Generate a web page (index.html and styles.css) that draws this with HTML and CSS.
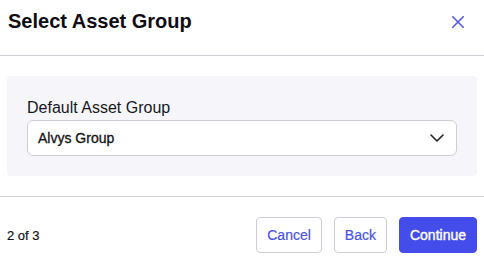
FILE: index.html
```html
<!DOCTYPE html>
<html lang="en">
<head>
  <meta charset="UTF-8">
  <title>Select Asset Group</title>
  <link rel="stylesheet" href="styles.css">
</head>
<body>
  <div class="modal">
    <div class="modal-header">
      <h2 class="modal-title">Select Asset Group</h2>
      <button class="close-btn" aria-label="Close">
        <svg width="12" height="12" viewBox="0 0 12 12">
          <path d="M0.8 0.8L11.2 11.2M11.2 0.8L0.8 11.2" stroke="#4f58e6" stroke-width="1.6" stroke-linecap="round"/>
        </svg>
      </button>
    </div>

    <div class="modal-body">
      <div class="field-box">
        <label for="assetGroup">Default Asset Group</label>
        <div class="select">
          <span class="select-value">Alvys Group</span>
          <svg width="14" height="8" viewBox="0 0 14 8">
            <path d="M1 1L7 7L13 1" fill="none" stroke="#222" stroke-width="1.6" stroke-linecap="round" stroke-linejoin="round"/>
          </svg>
        </div>
      </div>
    </div>

    <div class="modal-footer">
      <span class="step">2 of 3</span>
      <div class="actions">
        <button class="btn btn-outline">Cancel</button>
        <button class="btn btn-outline">Back</button>
        <button class="btn btn-primary">Continue</button>
      </div>
    </div>
  </div>
</body>
</html>
```

FILE: styles.css
```css
body {
  font-family: 'Liberation Sans', Arial, sans-serif;
  background-color: #fff;
  color: #111;
  margin: 0;
}

.modal {
  width: 484px;
}

.modal-header {
  display: flex;
  justify-content: space-between;
  align-items: flex-start;
  height: 55px;
  padding: 0 20px 0 8px;
  border-bottom: 1px solid #cfcfd6;
}

.modal-title {
  margin: 0;
  padding-top: 9px;
  font-size: 20px;
  font-weight: 700;
  line-height: 24px;
  color: #0d0d12;
}

.close-btn {
  background: none;
  border: none;
  padding: 0;
  margin-top: 16px;
  width: 12px;
  height: 12px;
  display: flex;
}

.modal-body {
  padding: 20px 7px;
}

.field-box {
  background-color: #f6f6fa;
  border-radius: 4px;
  padding: 20px;
}

label {
  display: block;
  font-size: 16px;
  line-height: 24px;
  color: #16161d;
}

.select {
  display: flex;
  justify-content: space-between;
  align-items: center;
  height: 34px;
  padding: 0 12px 0 10px;
  background-color: #fff;
  border: 1px solid #cdcdd6;
  border-radius: 6px;
}

.select-value {
  font-size: 14px;
  color: #111;
  -webkit-text-stroke: 0.3px #111;
}

.modal-footer {
  display: flex;
  justify-content: space-between;
  align-items: center;
  padding: 20px 7px 4px;
  border-top: 1px solid #cfcfd6;
}

.step {
  font-size: 13px;
  color: #111;
  -webkit-text-stroke: 0.2px #111;
}

.actions {
  display: flex;
  gap: 12px;
}

.btn {
  font-family: inherit;
  font-size: 14px;
  height: 36px;
  padding: 0 10px;
  border-radius: 4px;
  cursor: pointer;
}

.btn-outline {
  background-color: #fff;
  border: 1px solid #cdcdd6;
  color: #4a52e6;
  -webkit-text-stroke: 0.2px #4a52e6;
}

.btn-primary {
  background-color: #444ce9;
  border: 1px solid #444ce9;
  color: #fff;
  -webkit-text-stroke: 0.4px #fff;
}
```
